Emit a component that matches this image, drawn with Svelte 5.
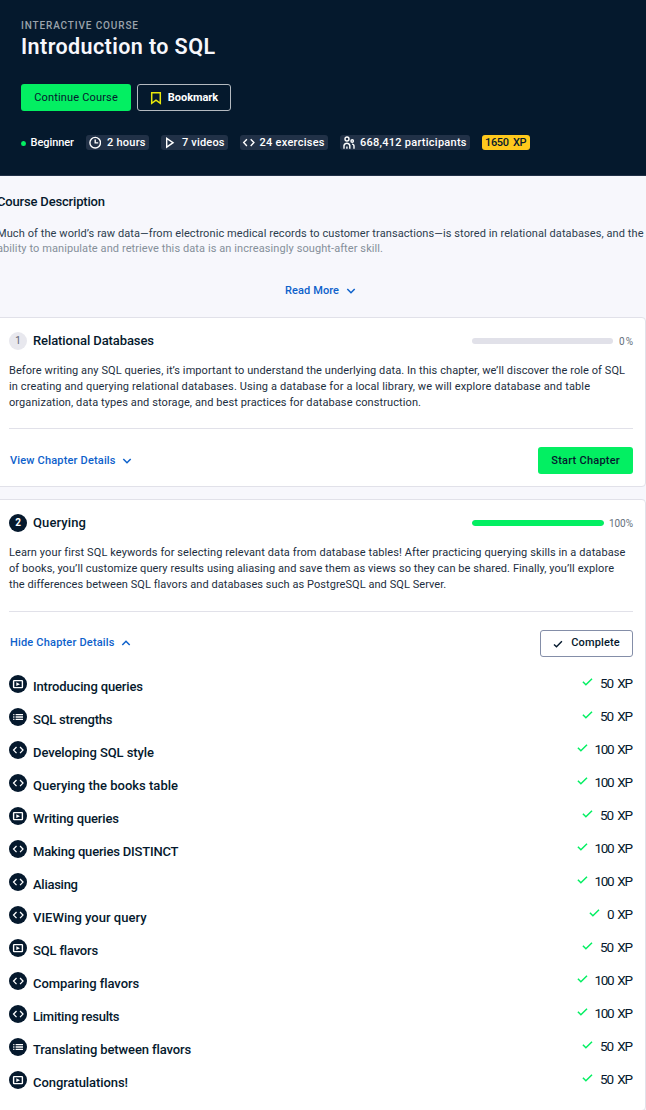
<script>
  const chips = [
    { icon: 'clock', text: '2 hours', tw: 38.5, w: 63 },
    { icon: 'play', text: '7 videos', tw: 42.5, w: 67 },
    { icon: 'code', text: '24 exercises', tw: 65, w: 88 },
    { icon: 'people', text: '668,412 participants', tw: 106.5, w: 130 }
  ];

  const chapters = [
    {
      n: 1, title: 'Relational Databases', tw: 121, progress: 0, pw: 14,
      lines: [
        ['Before writing any SQL queries, it’s important to understand the underlying data. In this chapter, we’ll discover the role of SQL', 616],
        ['in creating and querying relational databases. Using a database for a local library, we will explore database and table', 581],
        ['organization, data types and storage, and best practices for database construction.', 412]
      ],
      toggle: 'View Chapter Details', togglew: 105.5, items: []
    },
    {
      n: 2, title: 'Querying', tw: 53, progress: 100, pw: 24,
      lines: [
        ['Learn your first SQL keywords for selecting relevant data from database tables! After practicing querying skills in a database', 616],
        ['of books, you’ll customize query results using aliasing and save them as views so they can be shared. Finally, you’ll explore', 605],
        ['the differences between SQL flavors and databases such as PostgreSQL and SQL Server.', 437]
      ],
      toggle: 'Hide Chapter Details', togglew: 104.5,
      items: [
        ['video', 'Introducing queries', 110, 50],
        ['list', 'SQL strengths', 79.5, 50],
        ['code', 'Developing SQL style', 121, 100],
        ['code', 'Querying the books table', 145, 100],
        ['video', 'Writing queries', 86, 50],
        ['code', 'Making queries DISTINCT', 145.5, 100],
        ['code', 'Aliasing', 45, 100],
        ['code', 'VIEWing your query', 113.5, 0],
        ['video', 'SQL flavors', 65, 50],
        ['code', 'Comparing flavors', 106, 100],
        ['code', 'Limiting results', 86.5, 100],
        ['list', 'Translating between flavors', 158, 50],
        ['video', 'Congratulations!', 95, 50]
      ]
    }
  ];

  const xpWidth = { 0: 26, 50: 33, 100: 38.5 };

  // Tracks a single line of text so that it spans the given width.
  function fit(node, width) {
    const natural = node.getBoundingClientRect().width;
    const gaps = node.textContent.length - 1;
    const spacing = (width - natural) / gaps;
    node.style.letterSpacing = spacing + 'px';
    node.style.marginRight = -spacing + 'px';
  }
</script>

{#snippet icon(name)}
  {#if name === 'clock'}
    <svg width="13" height="13" viewBox="0 0 13 13"><circle cx="7.2" cy="6.7" r="5.3" /><path d="M7.2 3.4v3.5h3" /></svg>
  {:else if name === 'play'}
    <svg width="13" height="13" viewBox="0 0 13 13"><path d="M3.7 2.3v8.8l6.4-4.4z" /></svg>
  {:else if name === 'code'}
    <svg width="13" height="13" viewBox="0 0 13 13"><path d="M4.9 3.3L1.7 6.6l3.2 3.3M8.7 3.3l3.2 3.3-3.2 3.3" /></svg>
  {:else if name === 'people'}
    <svg width="13" height="13" viewBox="0 0 13 13" stroke-width="1.2"><circle cx="5" cy="3" r="2" /><path d="M2 12.8V9.5a3 3 0 0 1 5.8 0v3.3M4.9 12.8V10.4" /><circle cx="10.2" cy="5" r="1.2" /><path d="M10 8.1c1.5 0 2 .9 2 2v2.7" /></svg>
  {:else if name === 'video'}
    <svg width="18" height="18" viewBox="0 0 18 18"><rect x="4.6" y="5.6" width="8.8" height="7" rx=".5" /><path class="solid" d="M7.3 7.2v3.9l3.7-1.95z" /></svg>
  {:else if name === 'list'}
    <svg width="18" height="18" viewBox="0 0 18 18"><path d="M4.2 6.6h1.2M6.6 6.6H14M4.2 9h1.2M6.6 9H14M4.2 11.4h1.2M6.6 11.4H14" /></svg>
  {/if}
{/snippet}

{#snippet chevron(up)}
  <svg class="chev" class:up width="10" height="8" viewBox="0 0 10 8"><path d={up ? 'M1.3 6L5 2.3 8.7 6' : 'M1.3 2L5 5.7 8.7 2'} /></svg>
{/snippet}

<main>
  <header>
    <div class="kicker"><span use:fit={117}>INTERACTIVE COURSE</span></div>
    <h1><span use:fit={194}>Introduction to SQL</span></h1>
    <div class="actions">
      <button class="primary cont"><span use:fit={83.5}>Continue Course</span></button>
      <button class="mark">
        <svg width="12" height="14" viewBox="0 0 12 14"><path d="M1.7 1.7h8.6v10.6L6 9.2l-4.3 3.1z" /></svg>
        <span use:fit={50.5}>Bookmark</span>
      </button>
    </div>
    <div class="meta">
      <div class="level"><i></i><span use:fit={43.5}>Beginner</span></div>
      {#each chips as c}
        <div class="chip" style="width:{c.w}px">{@render icon(c.icon)}<span use:fit={c.tw}>{c.text}</span></div>
      {/each}
      <div class="xp-total"><span use:fit={41.5}>1650 XP</span></div>
    </div>
  </header>

  <section class="desc">
    <h2><span use:fit={108}>Course Description</span></h2>
    <div class="copy">
      <div><span use:fit={646.5}>Much of the world’s raw data—from electronic medical records to customer transactions—is stored in relational databases, and the</span></div>
      <div class="faded"><span use:fit={386}>ability to manipulate and retrieve this data is an increasingly sought-after skill.</span></div>
    </div>
    <div class="more"><a><span use:fit={54}>Read More</span>{@render chevron(false)}</a></div>
  </section>

  {#each chapters as ch}
    <article class:open={ch.items.length > 0}>
      <div class="head">
        <b class="num">{ch.n}</b>
        <h3><span use:fit={ch.tw}>{ch.title}</span></h3>
        <div class="progress">
          <div class="track"><div class="bar" style="width:{ch.progress}%"></div></div>
          <span class="pct" use:fit={ch.pw}>{ch.progress}%</span>
        </div>
      </div>
      <div class="text">
        {#each ch.lines as [line, w]}<div><span use:fit={w}>{line}</span></div>{/each}
      </div>
      <div class="foot">
        <a><span use:fit={ch.togglew}>{ch.toggle}</span>{@render chevron(ch.items.length > 0)}</a>
        {#if ch.items.length}
          <button class="done">
            <svg width="10" height="8" viewBox="0 0 10 8"><path d="M1 4.4l2.5 2.4L8.9 1.3" /></svg>
            <span use:fit={48.5}>Complete</span>
          </button>
        {:else}
          <button class="primary start"><span use:fit={68.5}>Start Chapter</span></button>
        {/if}
      </div>
      {#if ch.items.length}
        <ul>
          {#each ch.items as [kind, label, w, xp]}
            <li>
              <div class="badge" class:code={kind === 'code'}>{@render icon(kind)}</div>
              <div class="label"><span use:fit={w}>{label}</span></div>
              <svg class="tick" width="11" height="8" viewBox="0 0 11 8"><path d="M.9 3.8l3 3L10 .8" /></svg>
              <div class="xp" style="width:{xpWidth[xp]}px"><span use:fit={xpWidth[xp]}>{xp} XP</span></div>
            </li>
          {/each}
        </ul>
      {/if}
    </article>
  {/each}
</main>

<style>
  :global(body) { margin: 0; background: #f7f7fc; }
  main {
    width: 646px; height: 1110px; overflow: hidden; background: #f7f7fc;
    font-family: Roboto, "Liberation Sans", sans-serif; font-size: 11px; color: #05192d;
  }
  * { box-sizing: border-box; }
  span { display: inline-block; white-space: nowrap; flex: none; }
  svg { display: block; flex: none; fill: none; stroke: currentColor; stroke-width: 1.4; }
  .solid { fill: currentColor; stroke: none; }
  h1, h2, h3, ul { margin: 0; padding: 0; }
  button { font: inherit; font-weight: 500; color: inherit; border: 0; padding: 0; height: 27px; border-radius: 3px; display: flex; align-items: center; justify-content: center; }

  header { height: 176px; background: #05192d; border-bottom: 1px solid #213147; padding: 19px 21px 0; color: #fff; }
  .kicker { font-size: 10px; font-weight: 500; line-height: 14px; color: #9ba3ab; }
  h1 { font-size: 21.5px; font-weight: 600; line-height: 28px; color: #f7f7fc; }
  .actions { display: flex; gap: 6px; margin-top: 23px; }
  .primary { background: #03ef62; color: #05192d; }
  .cont { width: 110px; font-weight: 400; }
  .mark { width: 94px; border: 1px solid #b4bac0; background: none; color: #fff; font-weight: 700; gap: 6px; }
  .mark svg { color: #e8e80c; stroke-width: 1.5; }
  .meta { display: flex; gap: 12px; margin-top: 24px; height: 15px; align-items: center; font-weight: 500; line-height: 15px; }
  .level { display: flex; align-items: center; gap: 5px; width: 53px; }
  .level i { width: 5px; height: 5px; border-radius: 50%; background: #03ef62; margin-top: 2px; }
  .chip { height: 15px; border-radius: 3px; background: #213147; display: flex; align-items: center; justify-content: space-between; padding: 0 3.5px 0 2px; }
  .xp-total { height: 15px; width: 48px; border-radius: 3px; background: #ffc91c; color: #05192d; padding-left: 3px; word-spacing: 2px; }

  .desc { height: 141px; padding-top: 17px; }
  h2 { font-size: 13px; font-weight: 500; line-height: 17px; margin-left: -3px; }
  .copy { margin: 16px 0 0 -3px; line-height: 15px; color: #2c3d4e; }
  .faded { color: #858f9a; }
  .more { margin: 27px 0 0 285px; }
  .more a { height: 14px; }
  a { display: flex; align-items: center; gap: 6.5px; color: #0d61cb; font-weight: 500; }
  .chev { margin-top: 2px; stroke-width: 1.5; }
  .foot .chev { margin-top: 0; }

  article { background: #fff; border: 1px solid #e1e1e9; border-radius: 4px; margin: 0 0 12px -4px; height: 170px; padding: 14px 12px 0; }
  article.open { height: 612px; }
  .head { display: flex; height: 18px; align-items: center; }
  .num { width: 18px; height: 18px; border-radius: 50%; background: #e8e8ee; color: #5c6370; font-size: 10px; font-weight: 400; line-height: 18px; text-align: center; }
  .open .num { background: #05192d; color: #fff; font-weight: 700; }
  h3 { font-size: 13px; font-weight: 500; margin-left: 6px; line-height: 18px; }
  .progress { margin-left: auto; width: 161px; display: flex; align-items: center; gap: 6px; }
  .open .progress { gap: 5px; }
  .track { flex: 1; height: 6px; border-radius: 3px; background: #e1e1e9; overflow: hidden; }
  .bar { height: 6px; border-radius: 3px; background: #03ef62; }
  .pct { font-size: 10px; color: #65707c; }
  .text { margin-top: 13px; height: 66px; line-height: 16px; border-bottom: 1px solid #e1e1e9; color: #1c2e40; }
  .open .text { height: 67px; }
  .foot { display: flex; justify-content: space-between; align-items: center; margin-top: 18px; height: 27px; padding-left: 1px; }
  .open .foot a, .open .foot button { line-height: 12px; }
  .open .foot a { padding-bottom: 2px; }
  .start { width: 95px; }
  .done { width: 93px; border: 1px solid #848ea8; background: #fff; gap: 8px; }
  .done span { padding-bottom: 1px; }
  ul { list-style: none; margin-top: 18px; }
  li { display: flex; height: 33px; align-items: flex-start; }
  .badge { width: 18px; height: 18px; border-radius: 50%; background: #05192d; color: #fff; display: flex; align-items: center; justify-content: center; }
  .badge.code svg { width: 12px; height: 12px; }
  .label { margin: 3px auto 0 6px; font-size: 13px; font-weight: 500; line-height: 18px; }
  .tick { color: #03ef62; margin: 3px 7px 0 0; stroke-width: 1.5; }
  .xp { font-size: 13.5px; line-height: 17px; word-spacing: 2px; }
</style>
